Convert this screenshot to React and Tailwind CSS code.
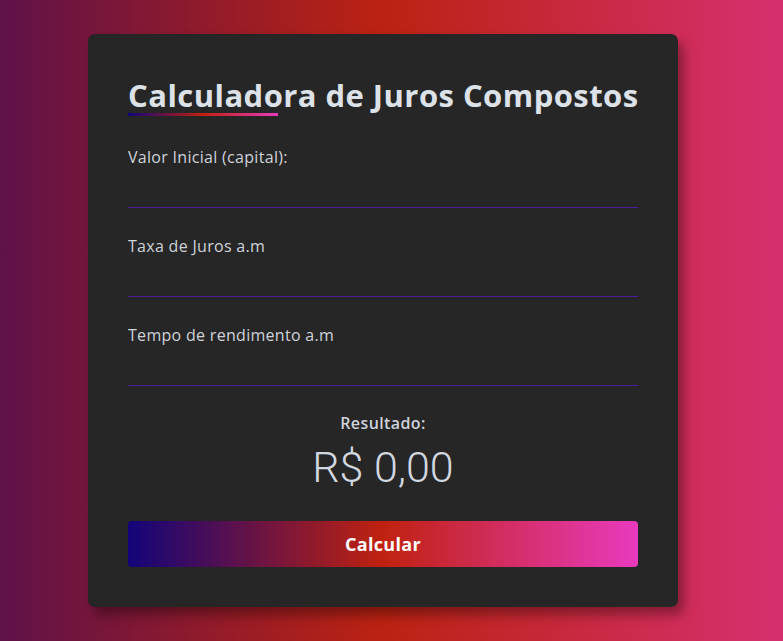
export default function App() {
  const font = { fontFamily: '"Open Sans", "Noto Sans", sans-serif' };
  return (
    <div
      className="min-h-screen w-full flex items-center bg-[linear-gradient(to_right,#5f1249,#bc2212_49%,#d73070)]"
      style={font}
    >
      <div className="ml-[88px] w-[590px] h-[573px] rounded-[7px] bg-[#262626] px-10 pt-[39px] shadow-[6px_8px_12px_rgba(0,0,0,0.35)] flex flex-col">
        <h1 className="text-[31px] leading-[44px] font-bold text-[#dde1e8] tracking-[0.45px] whitespace-nowrap">
          Calculadora de Juros Compostos
        </h1>
        <div className="h-[3px] w-[150px] -mt-[4px] bg-[linear-gradient(to_right,#12057a,#c0220f_50%,#e83abe)]" />
        {["Valor Inicial (capital):", "Taxa de Juros a.m", "Tempo de rendimento a.m"].map((l, i) => (
          <div key={i} className={i === 0 ? "mt-[30px]" : "mt-[27px]"}>
            <label className="block text-[16px] leading-[22px] tracking-[0.3px] text-[#cfd3da]">{l}</label>
            <input
              className="block w-full h-[40px] bg-transparent outline-none border-b border-[#4a1c9a] text-[#dde1e8]"
              type="text"
            />
          </div>
        ))}
        <div className="mt-[26px] text-center text-[16px] leading-[22px] font-semibold tracking-[0.4px] text-[#cfd3da]">Resultado:</div>
        <div
          className="mt-[8px] text-center text-[43px] leading-[50px] font-light text-[#d3d8e0]"
          style={{ fontFamily: 'Roboto, sans-serif' }}
        >
          R$ 0,00
        </div>
        <button className="mt-[29px] h-[46px] w-full rounded-[4px] bg-[linear-gradient(to_right,#12057a,#c0220f_50%,#e83abe)] text-white text-[18px] font-bold tracking-[0.3px]">
          Calcular
        </button>
      </div>
    </div>
  );
}
